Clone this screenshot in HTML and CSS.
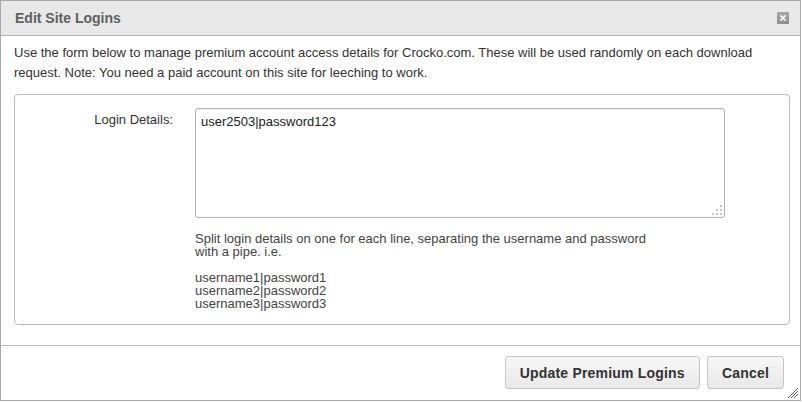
FILE: index.html
```html
<!DOCTYPE html>
<html>
<head>
<meta charset="utf-8">
<link rel="stylesheet" href="styles.css">
</head>
<body>
<div class="dialog">
  <div class="dialog-header">
    <span class="dialog-title">Edit Site Logins</span>
    <span class="close-btn">
      <svg width="12" height="12" viewBox="0 0 12 12">
        <defs>
          <linearGradient id="cg" x1="0" y1="0" x2="0" y2="1">
            <stop offset="0" stop-color="#a8a8a8"/>
            <stop offset="1" stop-color="#8e8e8e"/>
          </linearGradient>
        </defs>
        <rect x="0" y="0" width="12" height="12" fill="url(#cg)"/>
        <path d="M4 4 L8 8 M8 4 L4 8" stroke="#fff" stroke-width="1.6" stroke-linecap="square"/>
      </svg>
    </span>
  </div>
  <div class="dialog-body">
    <p class="intro">Use the form below to manage premium account access details for Crocko.com. These will be used randomly on each download request. Note: You need a paid account on this site for leeching to work.</p>
    <div class="fieldset">
      <div class="form-row">
        <label class="form-label">Login Details:</label>
        <div class="form-field">
          <div class="textarea-wrap">
            <textarea class="login-input">user2503|password123</textarea>
            <svg class="ta-grip" width="12" height="12" viewBox="0 0 12 12">
              <rect x="9" y="1" width="2" height="2" fill="#c4c4c4"/>
              <rect x="5" y="5" width="2" height="2" fill="#c4c4c4"/>
              <rect x="9" y="5" width="2" height="2" fill="#c4c4c4"/>
              <rect x="1" y="9" width="2" height="2" fill="#c4c4c4"/>
              <rect x="5" y="9" width="2" height="2" fill="#c4c4c4"/>
              <rect x="9" y="9" width="2" height="2" fill="#c4c4c4"/>
            </svg>
          </div>
          <div class="help">Split login details on one for each line, separating the username and password<br>with a pipe. i.e.<br><br>username1|password1<br>username2|password2<br>username3|password3</div>
        </div>
      </div>
    </div>
  </div>
  <div class="dialog-footer">
    <button class="btn">Update Premium Logins</button>
    <button class="btn">Cancel</button>
  </div>
  <svg class="dialog-grip" width="12" height="12" viewBox="0 0 12 12">
    <path d="M1 11 L11 1 M4 11 L11 4 M7 11 L11 7" stroke="#555" stroke-width="1"/>
  </svg>
</div>
</body>
</html>
```
FILE: styles.css
```css
html, body {
  margin: 0;
  padding: 0;
  background: #fff;
}

.dialog {
  box-sizing: border-box;
  width: 801px;
  height: 401px;
  border: 1px solid #a9a9a9;
  display: flex;
  flex-direction: column;
  position: relative;
  font-family: "Liberation Sans", Arial, sans-serif;
  background: #fff;
}

.dialog-header {
  height: 34px;
  background: #e8e8e8;
  border-bottom: 1px solid #b3b3b3;
  display: flex;
  align-items: center;
  justify-content: space-between;
  padding: 0 11px 0 14px;
}

.dialog-title {
  font-size: 14px;
  font-weight: bold;
  color: #606060;
}

.close-btn {
  display: block;
  width: 12px;
  height: 12px;
  margin-top: -1px;
}

.close-btn svg {
  display: block;
}

.dialog-body {
  flex: 1;
  padding: 7px 10px 0 13px;
}

.intro {
  margin: 0 0 11px 0;
  font-size: 13px;
  line-height: 20px;
  color: #333;
}

.fieldset {
  border: 1px solid #bcbcbc;
  border-radius: 4px;
  padding: 13px 0 14px 0;
}

.form-row {
  display: grid;
  grid-template-columns: 158px 530px;
  column-gap: 22px;
}

.form-label {
  text-align: right;
  font-size: 13px;
  line-height: 15px;
  color: #333;
  padding-top: 4px;
}

.textarea-wrap {
  position: relative;
  width: 530px;
  height: 110px;
}

.login-input {
  display: block;
  box-sizing: border-box;
  width: 530px;
  height: 110px;
  margin: 0;
  border: 1px solid #b4b4b4;
  border-radius: 3px;
  padding: 5px 5px;
  font-family: "Liberation Sans", Arial, sans-serif;
  font-size: 13px;
  line-height: 15px;
  color: #222;
  resize: none;
  outline: none;
  box-shadow: inset 0 1px 1px rgba(0, 0, 0, 0.05);
}

.ta-grip {
  position: absolute;
  right: 2px;
  bottom: 2px;
}

.help {
  margin-top: 14px;
  font-size: 13px;
  line-height: 13px;
  color: #444;
}

.dialog-footer {
  border-top: 1px solid #bcbcbc;
  padding: 10px 16px 11px 0;
  display: flex;
  justify-content: flex-end;
  gap: 7px;
}

.btn {
  box-sizing: border-box;
  height: 33px;
  padding: 0 14px;
  border: 1px solid #c6c6c6;
  border-radius: 3px;
  background: linear-gradient(#f7f7f7, #e8e8e8);
  font-family: "Liberation Sans", Arial, sans-serif;
  font-size: 14px;
  font-weight: bold;
  letter-spacing: 0.2px;
  color: #333;
}

.dialog-grip {
  position: absolute;
  right: 1px;
  bottom: 1px;
}
```
